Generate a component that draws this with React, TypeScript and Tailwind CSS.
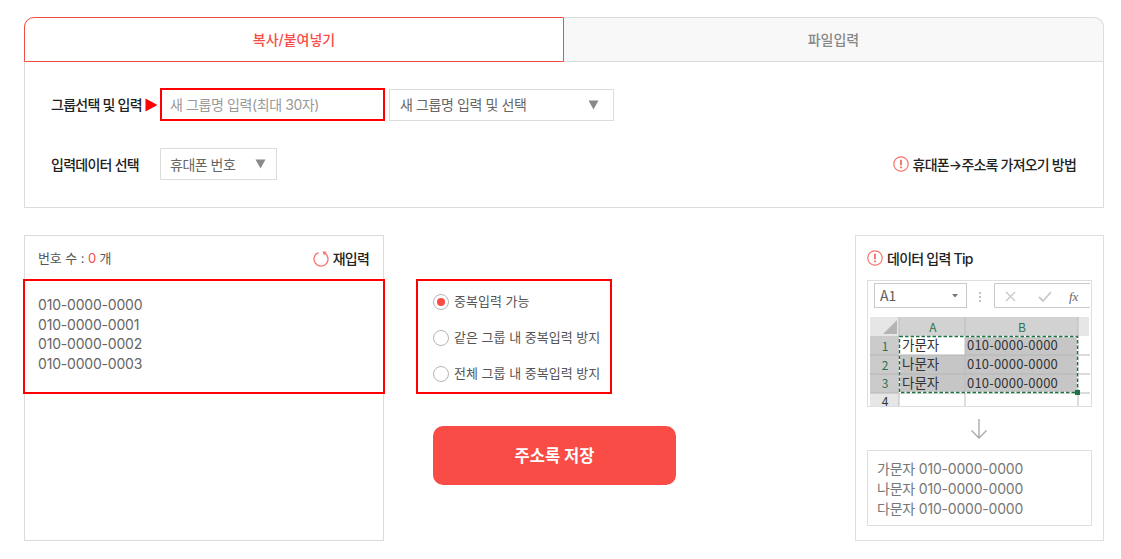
import React from "react";

const Caret = ({ className = "" }: { className?: string }) => (
  <svg width="11" height="10" viewBox="0 0 11 10" className={className}>
    <path d="M0.5 0.5H10.5L5.5 9.5Z" fill="#8a8a8a" />
  </svg>
);

const Alert = ({ size = 16 }: { size?: number }) => (
  <svg width={size} height={size} viewBox="0 0 16 16" className="shrink-0">
    <circle cx="8" cy="8" r="7.2" fill="none" stroke="#f8716c" strokeWidth="1.2" />
    <path d="M8 3.8V9.2" stroke="#f14c46" strokeWidth="1.5" />
    <rect x="7.2" y="10.6" width="1.6" height="1.6" fill="#f14c46" />
  </svg>
);

const Radio = ({ checked = false }: { checked?: boolean }) => (
  <span className="w-[16px] h-[16px] rounded-full border border-[#b5b5b5] bg-white flex items-center justify-center shrink-0">
    {checked && <span className="w-[8px] h-[8px] rounded-full bg-[#f94c46]" />}
  </span>
);

const font = "Noto Sans CJK KR, sans-serif";

const Excel = () => (
  <svg width="223" height="125" viewBox="0 0 223 125" className="block">
    <rect width="223" height="125" fill="#fff" />
    <rect x="6.5" y="2.5" width="92" height="24" fill="#fff" stroke="#c9c9c9" />
    <text x="12" y="20" fontSize="14" fill="#5d5d5d" fontFamily={font}>A1</text>
    <path d="M84 13h6l-3 3.5z" fill="#777" />
    <path d="M112 11v2M112 15v2M112 19v2" stroke="#aaa" strokeWidth="1.4" />
    <path d="M222 2.5H126.5V26.5H222" fill="#fff" stroke="#c9c9c9" />
    <path d="M138 11l9 9M147 11l-9 9" stroke="#c9c9c9" strokeWidth="1.4" />
    <path d="M171 16l4 4 8-9" stroke="#c9c9c9" strokeWidth="1.8" fill="none" />
    <text x="201" y="20" fontSize="13" fontStyle="italic" fill="#666" fontFamily="Liberation Serif, serif">fx</text>
    <rect x="2" y="36" width="219" height="19" fill="#e6e6e6" />
    <rect x="31" y="36" width="179" height="19" fill="#d2d2d2" />
    <rect x="2" y="36" width="29" height="89" fill="#e6e6e6" />
    <rect x="2" y="55" width="29" height="57" fill="#cbcbcb" />
    <path d="M29 39V53H15Z" fill="#b4b4b4" />
    <rect x="31" y="55" width="179" height="57" fill="#c6c6c6" />
    <rect x="31" y="55" width="66" height="19" fill="#fff" />
    <path d="M31 36V125M97 36V125M210 36V125" stroke="#bcbcbc" />
    <path d="M2 74H222M2 93H222M2 112H222" stroke="#b6b6b6" />
    <text x="65" y="51" fontSize="12" fill="#2e7250" textAnchor="middle" fontFamily={font}>A</text>
    <text x="154" y="51" fontSize="12" fill="#2e7250" textAnchor="middle" fontFamily={font}>B</text>
    {[["1", 70], ["2", 89], ["3", 107]].map(([n, y]) => (
      <text key={n} x="17" y={y} fontSize="12" fill="#2e7250" textAnchor="middle" fontFamily={font}>{n}</text>
    ))}
    <text x="17" y="125" fontSize="12" fill="#333" textAnchor="middle" fontFamily={font}>4</text>
    {[["가문자", 69], ["나문자", 88], ["다문자", 107]].map(([n, y]) => (
      <g key={n}>
        <text x="34" y={y} fontSize="13.5" fill="#333" fontFamily={font}>{n}</text>
        <text x="99" y={Number(y)} fontSize="13" letterSpacing="0.2" fill="#333" fontFamily={font}>010-0000-0000</text>
      </g>
    ))}
    <rect x="31.5" y="55.5" width="178" height="56" fill="none" stroke="#fff" strokeWidth="1.4" />
    <rect x="31.5" y="55.5" width="178" height="56" fill="none" stroke="#1f7246" strokeWidth="1.4" strokeDasharray="3.5 2" />
    <rect x="207" y="109" width="5" height="5" fill="#1f7246" />
  </svg>
);

export default function App() {
  return (
    <div className="w-[1121px] h-[559px] bg-white pl-[24px] pt-[17px] overflow-hidden text-[14px] text-[#666] font-['Inter','Noto_Sans_CJK_KR',sans-serif]">
      {/* top card */}
      <div className="w-[1080px] h-[191px] border border-[#dcdcdc] rounded-t-[10px] border-t-0">
        <div className="flex h-[45px] -mx-px">
          <div className="w-[540px] border border-[#f14c46] rounded-tl-[10px] flex items-center justify-center text-[#f94c46] font-medium">
            복사/붙여넣기
          </div>
          <div className="flex-1 bg-[#f8f8f8] border border-l-0 border-[#dcdcdc] rounded-tr-[10px] flex items-center justify-center text-[#888] font-medium">
            파일입력
          </div>
        </div>

        <div className="flex items-center mt-[26px] h-[33px]">
          <div className="w-[94px] ml-[26px] shrink-0 text-[#222] font-medium tracking-[-0.75px] whitespace-nowrap">그룹선택 및 입력</div>
          <svg width="13" height="14" viewBox="0 0 13 14" className="shrink-0">
            <path d="M0.5 0.5L12.5 7L0.5 13.5Z" fill="#f00" />
          </svg>
          <div className="ml-[2px] w-[225px] h-[33px] border-2 border-[#f00] flex items-center pl-[8px] text-[#999] tracking-[-0.4px]">
            새 그룹명 입력(최대 30자)
          </div>
          <div className="ml-[4px] w-[225px] h-[32px] border border-[#dcdcdc] flex items-center justify-between pl-[10px] pr-[14px] tracking-[-0.4px]">
            새 그룹명 입력 및 선택
            <Caret />
          </div>
        </div>

        <div className="flex items-center mt-[27px] h-[32px]">
          <div className="w-[109px] ml-[26px] shrink-0 text-[#222] font-medium tracking-[-0.75px] whitespace-nowrap">입력데이터 선택</div>
          <div className="w-[117px] h-[32px] border border-[#dcdcdc] flex items-center justify-between pl-[9px] pr-[10px] tracking-[-0.5px]">
            휴대폰 번호
            <Caret />
          </div>
          <div className="ml-auto mr-[27px] flex items-center gap-[4px] text-[#222] font-medium tracking-[-0.8px]">
            <Alert />
            휴대폰→주소록 가져오기 방법
          </div>
        </div>
      </div>

      {/* bottom */}
      <div className="flex w-[1080px] mt-[27px] h-[306px]">
        <div className="w-[360px] border border-[#dcdcdc]">
          <div className="h-[43px] pt-[2px] flex items-center justify-between pl-[13px] pr-[14px]">
            <div className="text-[13px] text-[#555] tracking-[-0.1px]">
              번호 수 : <span className="text-[#f94c46]">0</span> 개
            </div>
            <div className="flex items-center gap-[4px] text-[#222] font-medium text-[14px] tracking-[-0.8px]">
              <svg width="16" height="16" viewBox="0 0 16 16">
                <path d="M5.5 1.6A7 7 0 1 0 11 1.8" fill="none" stroke="#f8716c" strokeWidth="1.3" />
                <path d="M9.6 0.6L13.6 0.8L11 4.2Z" fill="#f8716c" />
              </svg>
              재입력
            </div>
          </div>
          <div className="-ml-[2px] w-[362px] h-[115px] border-2 border-[#f00] pt-[14px] pl-[13px] leading-[19.7px] tracking-[-0.2px]">
            <div>010-0000-0000</div>
            <div>010-0000-0001</div>
            <div>010-0000-0002</div>
            <div>010-0000-0003</div>
          </div>
        </div>

        <div className="ml-[32px] w-[260px] pt-[44px]">
          <div className="w-[196px] h-[115px] border-2 border-[#f00] flex flex-col gap-[16px] pt-[11px] pl-[15px] text-[13px] text-[#555]">
            <label className="flex items-center gap-[5px] h-[20px]"><Radio checked />중복입력 가능</label>
            <label className="flex items-center gap-[5px] h-[20px]"><Radio />같은 그룹 내 중복입력 방지</label>
            <label className="flex items-center gap-[5px] h-[20px]"><Radio />전체 그룹 내 중복입력 방지</label>
          </div>
          <button className="ml-[17px] mt-[32px] w-[243px] h-[59px] rounded-[10px] bg-[#f94c46] text-white text-[16.5px] font-bold pt-[2px]">
            주소록 저장
          </button>
        </div>

        <div className="ml-auto w-[249px] border border-[#dddde4] px-[11px]">
          <div className="h-[44px] flex items-center gap-[4px] text-[#222] font-medium text-[14px] tracking-[-0.75px]">
            <Alert />
            데이터 입력 Tip
          </div>
          <div className="w-[225px] h-[127px] border border-[#dddde4]">
            <Excel />
          </div>
          <div className="flex justify-center h-[43px] items-center pr-[2px]">
            <svg width="18" height="22" viewBox="0 0 18 22">
              <path d="M9 1V20M1.5 12.5L9 20L16.5 12.5" fill="none" stroke="#aaa" strokeWidth="1.4" />
            </svg>
          </div>
          <div className="w-[225px] h-[76px] border border-[#dddde4] flex flex-col justify-center pl-[9px] leading-[20px] text-[#777] pt-[2px] tracking-[-0.2px]">
            <div>가문자 010-0000-0000</div>
            <div>나문자 010-0000-0000</div>
            <div>다문자 010-0000-0000</div>
          </div>
        </div>
      </div>
    </div>
  );
}
